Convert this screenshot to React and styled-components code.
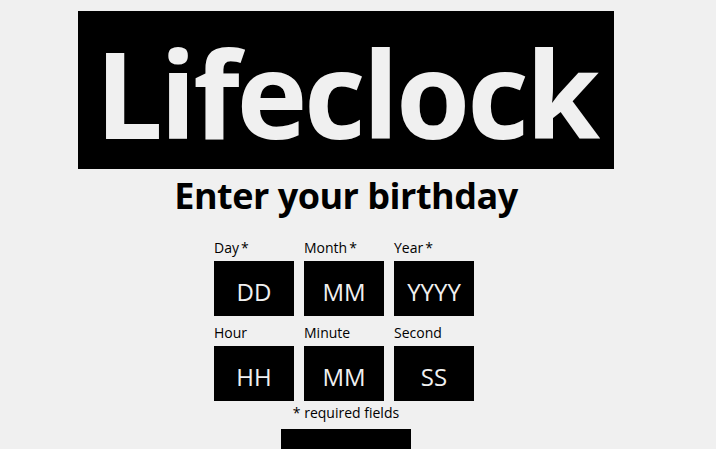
import React from 'react';
import styled, { createGlobalStyle } from 'styled-components';

const GlobalStyle = createGlobalStyle`
	body {
		margin: 0;
		background: #f0f0f0;
		font-family: 'Open Sans', 'Noto Sans', sans-serif;
		overflow: hidden;
	}
`;

const Page = styled.div`
	width: 692px;
	display: flex;
	flex-direction: column;
	align-items: center;
	padding-top: 11px;
`;

const Logo = styled.div`
	width: 536px;
	height: 158px;
	background: #000;
	color: #f0f0f0;
	display: flex;
	align-items: center;
	justify-content: center;
	padding-top: 6px;
	box-sizing: border-box;
	font-weight: 700;
	font-size: 120px;
	letter-spacing: -3.2px;
	line-height: 1;
`;

const Heading = styled.h1`
	margin: 8px 0 0;
	font-size: 36px;
	font-weight: 700;
	line-height: 38px;
	color: #000;
	letter-spacing: -0.5px;
`;

const Form = styled.form`
	margin-top: 24px;
	display: flex;
	flex-direction: column;
	align-items: center;
`;

const Grid = styled.div`
	display: grid;
	grid-template-columns: repeat(3, 80px);
	column-gap: 10px;
	row-gap: 8px;
	margin-right: 4px;
`;

const Field = styled.label`
	display: flex;
	flex-direction: column;
	gap: 5px;
	font-size: 14px;
	line-height: 17px;
	color: #000;
`;

const Star = styled.span`
	margin-left: 2px;
`;

const Input = styled.input`
	width: 80px;
	height: 55px;
	box-sizing: border-box;
	border: none;
	outline: none;
	background: #000;
	color: #f0f0f0;
	text-align: center;
	font-family: inherit;
	font-size: 24px;
	padding: 6px 0 0;

	&::placeholder {
		color: #f0f0f0;
		opacity: 1;
	}
`;

const Note = styled.p`
	margin: 2px 0 0;
	font-size: 14px;
	line-height: 20px;
	color: #000;
`;

const Submit = styled.button`
	margin-top: 6px;
	width: 130px;
	height: 40px;
	border: none;
	background: #000;
	color: #f0f0f0;
`;

const fields = [
	['Day', 'DD', true],
	['Month', 'MM', true],
	['Year', 'YYYY', true],
	['Hour', 'HH', false],
	['Minute', 'MM', false],
	['Second', 'SS', false]
];

export default function App() {
	return (
		<>
			<GlobalStyle />
			<Page>
				<Logo>Lifeclock</Logo>
				<Heading>Enter your birthday</Heading>
				<Form onSubmit={(e) => e.preventDefault()}>
					<Grid>
						{fields.map(([label, placeholder, required]) => (
							<Field key={label}>
								<span>
									{label}
									{required && <Star>*</Star>}
								</span>
								<Input placeholder={placeholder} />
							</Field>
						))}
					</Grid>
					<Note>* required fields</Note>
					<Submit type='submit' />
				</Form>
			</Page>
		</>
	);
}
